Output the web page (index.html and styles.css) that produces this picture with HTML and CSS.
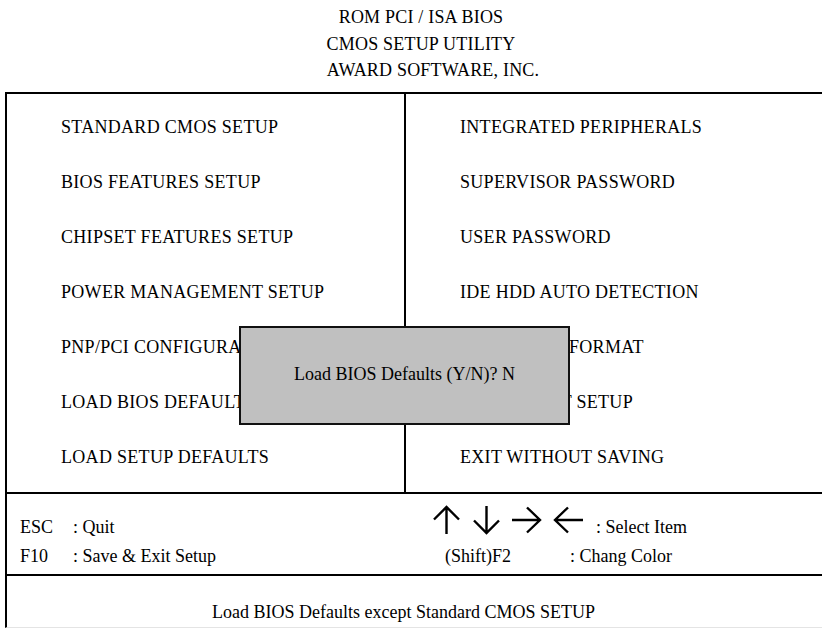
FILE: index.html
```html
<!DOCTYPE html>
<html>
<head>
<meta charset="utf-8">
<link rel="stylesheet" href="styles.css">
</head>
<body>
<div class="screen">
  <header class="title">
    <div class="t1">ROM PCI / ISA BIOS</div>
    <div class="t2">CMOS SETUP UTILITY</div>
    <div class="t3">AWARD SOFTWARE, INC.</div>
  </header>
  <div class="box">
    <div class="menu">
      <ul class="col left">
        <li>STANDARD CMOS SETUP</li>
        <li>BIOS FEATURES SETUP</li>
        <li>CHIPSET FEATURES SETUP</li>
        <li>POWER MANAGEMENT SETUP</li>
        <li>PNP/PCI CONFIGURATION</li>
        <li>LOAD BIOS DEFAULTS</li>
        <li>LOAD SETUP DEFAULTS</li>
      </ul>
      <ul class="col right">
        <li>INTEGRATED PERIPHERALS</li>
        <li>SUPERVISOR PASSWORD</li>
        <li>USER PASSWORD</li>
        <li>IDE HDD AUTO DETECTION</li>
        <li>LOW LEVEL FORMAT</li>
        <li>SAVE &amp; EXIT SETUP</li>
        <li>EXIT WITHOUT SAVING</li>
      </ul>
      <div class="dialog">Load BIOS Defaults (Y/N)? N</div>
    </div>
    <div class="keys">
      <div class="keys-left">
        <span class="k">ESC</span><span>: Quit</span>
        <span class="k">F10</span><span>: Save &amp; Exit Setup</span>
      </div>
      <div class="keys-right">
        <div class="row1">
          <span class="arrows">
            <svg width="29" height="30" viewBox="0 0 29 30"><path d="M14.5 29V2M2 14.5L14.5 2L27 14.5" fill="none" stroke="#000" stroke-width="2.4"/></svg>
            <svg width="29" height="30" viewBox="0 0 29 30"><path d="M14.5 1V28M2 15.5L14.5 28L27 15.5" fill="none" stroke="#000" stroke-width="2.4"/></svg>
            <svg width="30" height="30" viewBox="0 0 30 30"><path d="M0 15H28M15 2.5L28 15L15 27.5" fill="none" stroke="#000" stroke-width="2.4"/></svg>
            <svg width="30" height="30" viewBox="0 0 30 30"><path d="M30 15H2M15 2.5L2 15L15 27.5" fill="none" stroke="#000" stroke-width="2.4"/></svg>
          </span>
          <span class="sel">: Select Item</span>
        </div>
        <div class="row2">
          <span class="shift">(Shift)F2</span><span>: Chang Color</span>
        </div>
      </div>
    </div>
    <div class="status">Load BIOS Defaults except Standard CMOS SETUP</div>
  </div>
</div>
</body>
</html>
```
FILE: styles.css
```css
html, body {
  margin: 0;
  padding: 0;
  background: #fff;
}
body {
  width: 822px;
  height: 628px;
  overflow: hidden;
  font-family: "Liberation Serif", "Times New Roman", serif;
  font-size: 18px;
  color: #000;
}
.screen {
  position: relative;
  width: 822px;
  height: 628px;
}
.title {
  height: 92px;
  box-sizing: border-box;
  padding-top: 4px;
  line-height: 26.5px;
  letter-spacing: 0.2px;
}
.title div {
  width: 842px;
  text-align: center;
  white-space: nowrap;
}
.t3 { padding-left: 24px; box-sizing: border-box; }
.box {
  margin-left: 5px;
  width: 830px;
  border-left: 2px solid #000;
  border-top: 2px solid #000;
  border-bottom: 1px solid #e4e4e4;
}
.menu {
  position: relative;
  display: grid;
  grid-template-columns: 397px 1fr;
  height: 398px;
  border-bottom: 2px solid #000;
}
.col {
  list-style: none;
  margin: 0;
  padding: 6px 0 0 54px;
}
.col li {
  height: 55px;
  line-height: 55px;
  white-space: nowrap;
  letter-spacing: 0.3px;
}
.col.right {
  border-left: 2px solid #000;
}
.dialog {
  position: absolute;
  left: 232px;
  top: 232px;
  width: 327px;
  height: 93px;
  border: 2px solid #111;
  background: #c0c0c0;
  display: flex;
  align-items: center;
  justify-content: center;
  padding-bottom: 2px;
  box-sizing: content-box;
}
.keys {
  display: grid;
  grid-template-columns: 399px 1fr;
  height: 80px;
  border-bottom: 2px solid #000;
}
.keys-left {
  display: grid;
  grid-template-columns: 53px auto;
  grid-auto-rows: 29px;
  align-content: start;
  padding: 19px 0 0 13px;
  line-height: 29px;
}
.keys-right {
  padding-left: 26px;
}
.row1 {
  display: flex;
  align-items: flex-end;
  height: 48px;
}
.arrows {
  display: flex;
  gap: 11px;
  margin-top: 11px;
  margin-bottom: 7px;
  align-items: flex-end;
}
.arrows svg { display: block; }
.sel {
  margin-left: 13px;
  line-height: 29px;
  margin-bottom: 0px;
}
.row2 {
  display: flex;
  line-height: 29px;
  padding-left: 13px;
}
.shift { width: 125px; }
.status {
  height: 51px;
  box-sizing: border-box;
  padding: 22px 0 0 205px;
  line-height: 29px;
}
```
